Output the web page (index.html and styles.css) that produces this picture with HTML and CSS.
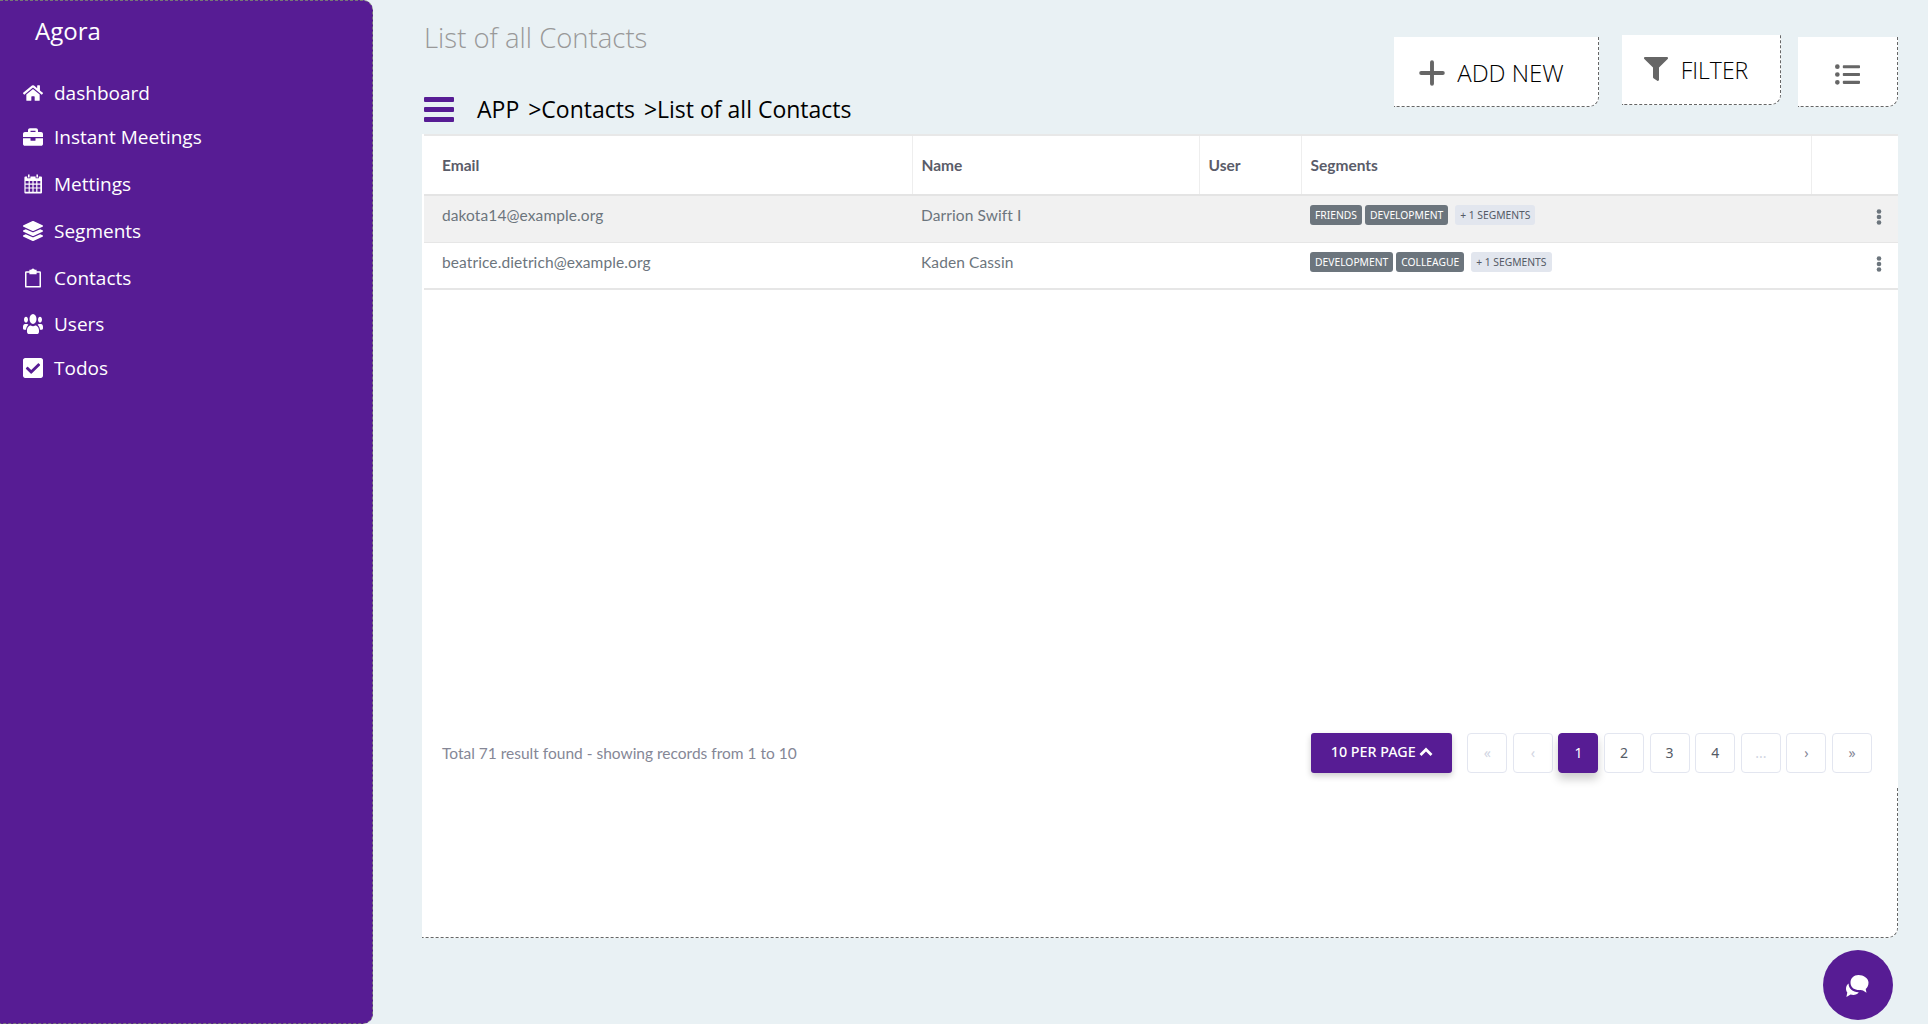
FILE: index.html
```html
<!DOCTYPE html>
<html lang="en">
<head>
    <meta charset="UTF-8">
    <meta name="viewport" content="width=device-width, initial-scale=1.0">
    <title>List of all Contacts</title>
    <link rel="stylesheet" href="styles.css">
</head>
<body>
    <aside class="sidebar">
        <div class="brand">Agora</div>
        <ul class="nav">
            <li class="nav-item nav-dashboard">
                <svg class="nav-icon" viewBox="0 0 576 512"><path d="M280.37 148.26L96 300.11V464a16 16 0 0 0 16 16l112.06-.29a16 16 0 0 0 15.92-16V368a16 16 0 0 1 16-16h64a16 16 0 0 1 16 16v95.64a16 16 0 0 0 16 16.05L464 480a16 16 0 0 0 16-16V300L295.67 148.26a12.19 12.19 0 0 0-15.3 0zM571.6 251.47L488 182.56V44.05a12 12 0 0 0-12-12h-56a12 12 0 0 0-12 12v72.61L318.47 43a48 48 0 0 0-61 0L4.34 251.47a12 12 0 0 0-1.6 16.9l25.5 31A12 12 0 0 0 45.15 301l235.22-193.74a12.19 12.19 0 0 1 15.3 0L530.9 301a12 12 0 0 0 16.9-1.6l25.5-31a12 12 0 0 0-1.7-16.93z"/></svg>
                dashboard
            </li>
            <li class="nav-item nav-instant">
                <svg class="nav-icon" viewBox="0 0 512 512"><path d="M320 336c0 8.84-7.16 16-16 16h-96c-8.84 0-16-7.16-16-16v-48H0v144c0 25.6 22.4 48 48 48h416c25.6 0 48-22.4 48-48V288H320v48zm144-208h-80V80c0-25.6-22.4-48-48-48H176c-25.6 0-48 22.4-48 48v48H48c-25.6 0-48 22.4-48 48v80h512v-80c0-25.6-22.4-48-48-48zm-144 0H192V96h128v32z"/></svg>
                Instant Meetings
            </li>
            <li class="nav-item">
                <svg class="nav-icon" viewBox="0 0 20 20"><path d="M5 0.5h1.6v3H5zM13.4 0.5H15v3h-1.6z"/><path d="M2.4 2.4H4.2v1.8h3.2V2.4h5.2v1.8h3.2V2.4h2.2a1 1 0 0 1 1 1v15.1a1 1 0 0 1-1 1H2.4a1 1 0 0 1-1-1V3.400a1 1 0 0 1 1-1zM2.600 7v2.600h3V7zm4.200 0v2.600h2.600V7zm3.800 0v2.600h2.600V7zm3.800 0v2.600h2.900V7zM2.600 10.700v2.700h3v-2.700zm4.200 0v2.700h2.600v-2.700zm3.800 0v2.700h2.600v-2.700zm3.800 0v2.700h2.900v-2.700zM2.600 14.500v3.200h3v-3.200zm4.200 0v3.200h2.600v-3.200zm3.800 0v3.200h2.600v-3.200zm3.800 0v3.200h2.900v-3.200z" fill-rule="evenodd"/></svg>
                Mettings
            </li>
            <li class="nav-item">
                <svg class="nav-icon" viewBox="0 0 512 512"><path d="M12.41 148.02l232.94 105.67c6.8 3.09 14.49 3.09 21.29 0l232.94-105.67c16.55-7.51 16.55-32.52 0-40.03L266.65 2.31a25.607 25.607 0 0 0-21.29 0L12.41 107.98c-16.55 7.51-16.55 32.53 0 40.04zm487.18 88.28l-58.09-26.33-161.64 73.27c-7.56 3.43-15.59 5.17-23.86 5.17s-16.29-1.74-23.86-5.17L70.51 209.97l-58.1 26.33c-16.55 7.5-16.55 32.5 0 40l232.94 105.59c6.8 3.08 14.49 3.08 21.29 0L499.59 276.3c16.55-7.5 16.55-32.5 0-40zm0 127.8l-57.87-26.23-161.86 73.37c-7.56 3.43-15.59 5.17-23.86 5.17s-16.29-1.74-23.86-5.17L70.29 337.87 12.41 364.1c-16.55 7.5-16.55 32.5 0 40l232.94 105.59c6.8 3.08 14.49 3.08 21.29 0L499.59 404.1c16.55-7.5 16.55-32.5 0-40z"/></svg>
                Segments
            </li>
            <li class="nav-item nav-contacts">
                <svg class="nav-icon" viewBox="0 0 20 20"><path d="M3.200 3.200h3.200V1.800h1.800A2 2 0 0 1 10 .4a2 2 0 0 1 1.800 1.400h1.800v1.400h3.200a1.200 1.200 0 0 1 1.200 1.200v14a1.200 1.200 0 0 1-1.200 1.200H3.200A1.200 1.200 0 0 1 2 18.400v-14a1.200 1.200 0 0 1 1.200-1.200zm.3 1.500v13.300h13V4.700h-2.900v1.500H6.400V4.700z" fill-rule="evenodd"/></svg>
                Contacts
            </li>
            <li class="nav-item nav-users">
                <svg class="nav-icon" viewBox="0 32 640 448" preserveAspectRatio="none"><path d="M96 224c35.3 0 64-28.700 64-64s-28.700-64-64-64-64 28.700-64 64 28.700 64 64 64zm448 0c35.300 0 64-28.700 64-64s-28.700-64-64-64-64 28.700-64 64 28.700 64 64 64zm32 32h-64c-17.600 0-33.500 7.100-45.100 18.600 40.300 22.100 68.900 62 75.100 109.400h66c17.700 0 32-14.300 32-32v-32c0-35.300-28.700-64-64-64zm-256 0c61.900 0 112-50.100 112-112S381.900 32 320 32 208 82.100 208 144s50.100 112 112 112zm76.800 32h-8.300c-20.800 10-43.900 16-68.500 16s-47.600-6-68.500-16h-8.300C179.600 288 128 339.600 128 403.200V432c0 26.500 21.500 48 48 48h288c26.500 0 48-21.500 48-48v-28.800c0-63.600-51.600-115.200-115.200-115.200zm-223.700-13.400C161.500 263.100 145.600 256 128 256H64c-35.300 0-64 28.700-64 64v32c0 17.700 14.300 32 32 32h65.900c6.300-47.400 34.900-87.300 75.200-109.400z"/></svg>
                Users
            </li>
            <li class="nav-item nav-todos">
                <svg class="nav-icon" viewBox="0 32 448 448"><path d="M400 480H48c-26.510 0-48-21.490-48-48V80c0-26.510 21.490-48 48-48h352c26.510 0 48 21.490 48 48v352c0 26.510-21.490 48-48 48zm-204.686-98.059l184-184c6.248-6.248 6.248-16.379 0-22.627l-22.627-22.627c-6.248-6.248-16.379-6.249-22.628 0L184 302.745l-70.059-70.059c-6.248-6.248-16.379-6.248-22.628 0l-22.627 22.627c-6.248 6.248-6.248 16.379 0 22.627l104 104c6.249 6.250 16.379 6.250 22.628.001z"/></svg>
                Todos
            </li>
        </ul>
    </aside>

    <main class="content">
        <header class="page-header">
            <div class="page-titles">
                <h1 class="page-title">List of all Contacts</h1>
                <div class="breadcrumb">
                    <svg class="menu-icon" viewBox="0 0 30 25"><rect y="0" width="30" height="5" rx="1"/><rect y="10" width="30" height="5" rx="1"/><rect y="20" width="30" height="5" rx="1"/></svg>
                    <span class="crumbs"><span class="crumb-app">APP</span> &gt;Contacts <span class="crumb-last">&gt;List of all Contacts</span></span>
                </div>
            </div>
            <div class="actions">
                <button class="action-btn add-btn">
                    <svg class="plus-icon" viewBox="0 0 24 24"><path d="M12 2v20M2 12h20"/></svg>
                    ADD NEW
                </button>
                <button class="action-btn filter-btn">
                    <svg class="filter-icon" viewBox="0 0 512 512"><path d="M487.976 0H24.028C2.710 0-8.047 25.866 7.058 40.971L192 225.941V432c0 7.831 3.821 15.170 10.237 19.662l80 55.980C298.020 518.690 320 507.493 320 487.980V225.941l184.947-184.970C520.021 25.896 509.338 0 487.976 0z"/></svg>
                    FILTER
                </button>
                <button class="action-btn list-btn">
                    <svg class="list-icon" viewBox="0 0 512 512"><path d="M48 48a48 48 0 1 0 48 48 48 48 0 0 0-48-48zm0 160a48 48 0 1 0 48 48 48 48 0 0 0-48-48zm0 160a48 48 0 1 0 48 48 48 48 0 0 0-48-48zm448 16H176a16 16 0 0 0-16 16v32a16 16 0 0 0 16 16h320a16 16 0 0 0 16-16v-32a16 16 0 0 0-16-16zm0-320H176a16 16 0 0 0-16 16v32a16 16 0 0 0 16 16h320a16 16 0 0 0 16-16V80a16 16 0 0 0-16-16zm0 160H176a16 16 0 0 0-16 16v32a16 16 0 0 0 16 16h320a16 16 0 0 0 16-16v-32a16 16 0 0 0-16-16z"/></svg>
                </button>
            </div>
        </header>

        <section class="card">
            <div class="table-wrap">
                <table class="contacts">
                    <colgroup>
                        <col class="col-email"><col class="col-name"><col class="col-user"><col class="col-segments"><col class="col-menu">
                    </colgroup>
                    <thead>
                        <tr><th>Email</th><th>Name</th><th>User</th><th>Segments</th><th></th></tr>
                    </thead>
                    <tbody>
                        <tr class="row-hover">
                            <td>dakota14@example.org</td>
                            <td>Darrion Swift I</td>
                            <td></td>
                            <td>
                                <div class="badges">
                                    <span class="badge">FRIENDS</span><span class="badge">DEVELOPMENT</span><span class="badge badge-more">+ 1 SEGMENTS</span>
                                </div>
                            </td>
                            <td class="cell-menu"><svg class="dots" viewBox="0 0 6 16"><circle cx="3" cy="2.500" r="2.300"/><circle cx="3" cy="8" r="2.300"/><circle cx="3" cy="13.500" r="2.300"/></svg></td>
                        </tr>
                        <tr>
                            <td>beatrice.dietrich@example.org</td>
                            <td>Kaden Cassin</td>
                            <td></td>
                            <td>
                                <div class="badges">
                                    <span class="badge">DEVELOPMENT</span><span class="badge">COLLEAGUE</span><span class="badge badge-more">+ 1 SEGMENTS</span>
                                </div>
                            </td>
                            <td class="cell-menu"><svg class="dots" viewBox="0 0 6 16"><circle cx="3" cy="2.500" r="2.300"/><circle cx="3" cy="8" r="2.300"/><circle cx="3" cy="13.500" r="2.300"/></svg></td>
                        </tr>
                    </tbody>
                </table>
                <div class="table-footer">
                    <span class="result-count">Total 71 result found - showing records from 1 to 10</span>
                    <div class="pager">
                        <button class="per-page">10 PER PAGE
                            <svg class="chevron" viewBox="0 0 14 10"><path d="M1.500 8L7 2.500 12.500 8"/></svg>
                        </button>
                        <ul class="pages">
                            <li class="page off">«</li>
                            <li class="page off">‹</li>
                            <li class="page current">1</li>
                            <li class="page">2</li>
                            <li class="page">3</li>
                            <li class="page">4</li>
                            <li class="page off">...</li>
                            <li class="page muted">›</li>
                            <li class="page muted">»</li>
                        </ul>
                    </div>
                </div>
            </div>
        </section>
    </main>

    <button class="chat-btn">
        <svg class="chat-icon" viewBox="0 0 26 26"><path d="M14.500 2C9.800 2 6.500 5.300 6.500 9.500c0 3.800 2.700 7 7 7.400 2 .2 4.500 .1 5.500 .6l3.500 2.200-.8-3.600c1.800-1.400 2.800-3.900 2.800-6.600C24.500 5.300 19.500 2 14.500 2z"/><path d="M4.600 10.500c-1.700 1.300-2.600 3.100-2.600 5.200 0 1.500 .5 2.800 1.300 3.800L2.400 24l4.200-2.400c.9 .3 1.800 .4 2.700 .4 2.300 0 4.300-1 5.500-2.800-5.700 .2-10.300-3.300-10.200-8.700z"/></svg>
    </button>
</body>
</html>
```
FILE: styles.css
```css
* {
    box-sizing: border-box;
}
body {
    display: flex;
    margin: 0;
    height: 100vh;
    overflow: hidden;
    background-color: #e9f1f4;
    font-family: "Open Sans", sans-serif;
}

/* sidebar */
.sidebar {
    width: 373px;
    flex-shrink: 0;
    background-color: #571c94;
    color: #fff;
    border: 1px dashed #777;
    border-left: none;
    border-radius: 0 10px 10px 0;
}
.brand {
    padding: 14px 0 0 35px;
    font-size: 24px;
    line-height: 32px;
}
.nav {
    list-style: none;
    margin: 0;
    padding: 24px 0 0 23px;
}
.nav-item {
    display: flex;
    align-items: center;
    gap: 11px;
    height: 47.5px;
    font-size: 19px;
}
.nav-dashboard {
    height: 43px;
}
.nav-instant {
    height: 46px;
}
.nav-contacts {
    height: 46.5px;
}
.nav-users,
.nav-todos {
    height: 44px;
}
.nav-icon {
    width: 20px;
    height: 20px;
    fill: #fff;
}

/* main column */
.content {
    flex: 1;
    min-width: 0;
    padding: 0 30px 0 49px;
}
.page-header {
    display: flex;
    justify-content: space-between;
    height: 134px;
}
.page-title {
    margin: 0;
    padding: 20px 0 0 2px;
    font-size: 27.500px;
    line-height: 36px;
    font-weight: 300;
    color: #999;
}
.breadcrumb {
    display: flex;
    align-items: center;
    margin-top: 37px;
    padding-left: 2px;
    font-size: 23px;
    line-height: 32px;
    color: #000;
}
.menu-icon {
    width: 30px;
    height: 25px;
    margin-right: 23px;
    fill: #571c94;
}
.crumb-app {
    margin-right: 3px;
}
.crumb-last {
    margin-left: 3px;
}
.actions {
    display: flex;
    align-items: flex-start;
    padding-top: 35px;
    gap: 23px;
}
.action-btn {
    display: flex;
    align-items: center;
    justify-content: center;
    height: 70px;
    background: #fff;
    color: #000;
    border: 1px dashed #666;
    border-top: none;
    border-left: none;
    border-radius: 0 0 10px 0;
    font-family: inherit;
    font-size: 24px;
    font-weight: 300;
}
.add-btn {
    width: 205px;
    gap: 12px;
    margin-top: 2px;
    padding: 2px 9px 0 0;
}
.filter-btn {
    width: 159px;
    gap: 13px;
    padding-right: 16px;
    font-size: 23px;
}
.list-btn {
    width: 100px;
    margin-top: 2px;
    margin-left: -6px;
}
.plus-icon {
    width: 26px;
    height: 26px;
    fill: none;
    stroke: #666;
    stroke-width: 3.600;
    stroke-linecap: round;
}
.filter-icon {
    width: 24px;
    height: 24px;
    fill: #666;
    margin-top: -2px;
}
.list-icon {
    width: 25px;
    height: 25px;
    margin-top: 6px;
    fill: #666;
}

/* contacts card */
.card {
    height: 804px;
    background: #fff;
    border: 1px dashed #666;
    border-top: none;
    border-left: none;
    border-radius: 0 0 10px 0;
}
.table-wrap {
    height: 652px;
    margin-left: 2px;
    margin-right: -1px;
    background: #fff;
    border-top: 2px solid #e8e8e8;
    display: flex;
    flex-direction: column;
    justify-content: space-between;
    font-family: Lato, sans-serif;
    color: #6c757d;
}
.contacts {
    width: 100%;
    border-collapse: collapse;
    table-layout: fixed;
}
.col-email { width: 488px; }
.col-name { width: 287px; }
.col-user { width: 102px; }
.col-segments { width: 510px; }
.contacts th {
    height: 59px;
    padding: 0 9px;
    text-align: left;
    font-size: 15.500px;
    font-weight: 700;
    color: #5a5c69;
    border-right: 1px solid #eee;
    border-bottom: 2px solid #e4e4e4;
}
.contacts th:first-child,
.contacts td:first-child {
    padding-left: 18px;
}
.contacts th:last-child {
    border-right: none;
}
.contacts td {
    height: 47px;
    padding: 0 9px 7px 9px;
    font-size: 15.500px;
    letter-spacing: 0.1px;
    border-bottom: 1px solid #e6e6e6;
}
.contacts tbody tr:last-child td {
    border-bottom-width: 2px;
}
.row-hover {
    background: #f1f1f1;
}
.badges {
    display: flex;
    gap: 3px;
}
.badge {
    height: 20px;
    padding: 0 5px;
    border-radius: 3px;
    background: #6c757d;
    color: #fff;
    font-family: "Noto Sans", sans-serif;
    font-size: 10.300px;
    line-height: 20px;
    letter-spacing: 0;
}
.badge-more {
    margin-left: 4px;
    background: #e2e6ee;
    color: #555b66;
}
.contacts .cell-menu {
    padding: 0 16px 0 0;
    text-align: right;
}
.dots {
    width: 6px;
    height: 16px;
    fill: #6c757d;
}
.table-footer {
    display: flex;
    align-items: center;
    justify-content: space-between;
    height: 40px;
    margin-bottom: 13px;
    padding: 0 26px 0 18px;
}
.result-count {
    margin-top: -1px;
    font-size: 15.500px;
    color: #858796;
}
.pager {
    display: flex;
    gap: 15px;
}
.per-page {
    display: flex;
    align-items: center;
    justify-content: center;
    gap: 3px;
    width: 141px;
    height: 40px;
    padding: 0 0 3px;
    border: none;
    border-radius: 3px;
    background: #571c94;
    color: #fff;
    font-family: "Noto Sans", sans-serif;
    font-size: 14.300px;
    font-weight: 500;
    box-shadow: 0 3px 6px rgba(0, 0, 0, 0.2);
}
.chevron {
    width: 14px;
    height: 10px;
    fill: none;
    stroke: #fff;
    stroke-width: 2.800;
}
.pages {
    display: flex;
    gap: 5.600px;
    list-style: none;
    margin: 0;
    padding: 0;
}
.page {
    width: 40px;
    height: 40px;
    border: 1px solid #e3e6f0;
    border-radius: 4px;
    background: #fff;
    color: #555b66;
    font-family: "Noto Sans", sans-serif;
    font-size: 14px;
    line-height: 38px;
    text-align: center;
}
.off {
    color: #d1d5e2;
}
.muted {
    color: #858796;
}
.current {
    background: #571c94;
    border-color: #571c94;
    color: #fff;
    box-shadow: 0 6px 10px rgba(0, 0, 0, 0.2);
}

/* floating chat button */
.chat-btn {
    position: fixed;
    right: 35px;
    bottom: 4px;
    width: 70px;
    height: 70px;
    padding: 0;
    border: none;
    border-radius: 50%;
    background: #571c94;
}
.chat-icon {
    display: block;
    width: 26px;
    height: 26px;
    margin: 2px 23px 0 auto;
    fill: #fff;
}
```
